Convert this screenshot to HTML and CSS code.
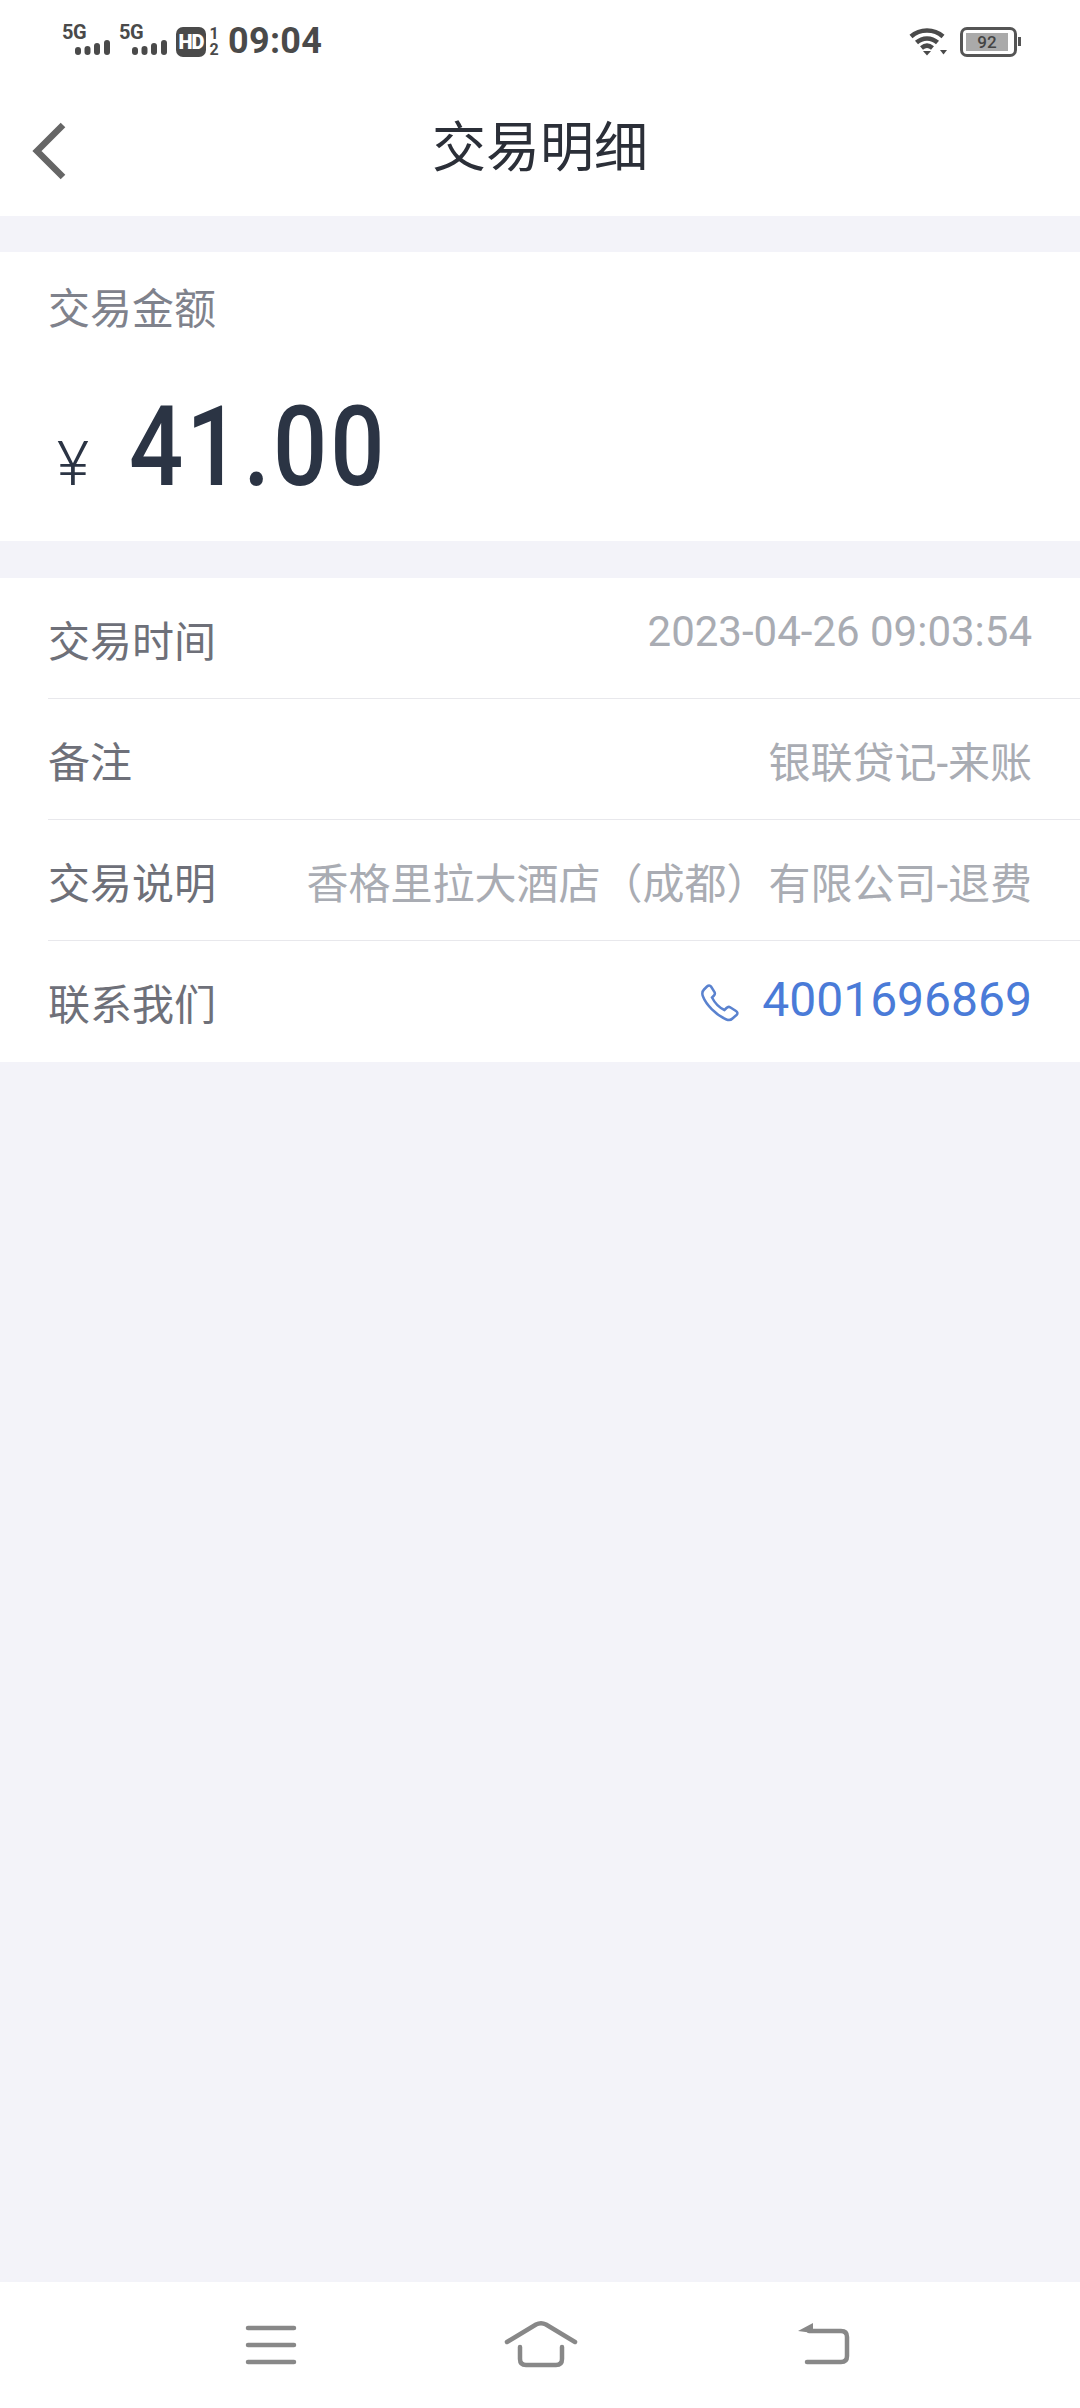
FILE: index.html
```html
<!DOCTYPE html>
<html lang="zh-CN">
<head>
  <meta charset="UTF-8">
  <title>交易明细</title>
  <link rel="stylesheet" href="styles.css">
</head>
<body>
<div id="app">
  <div class="statusbar">
    <div class="status-left">
      <div class="signal">
        <span class="signal-label">5G</span>
        <svg class="signal-bars" width="35" height="15" viewBox="0 0 35 15"><rect x="0" y="7" width="6" height="8" rx="3"/><rect x="9.500" y="6" width="6" height="9" rx="3"/><rect x="19" y="3" width="6" height="12" rx="3"/><rect x="29" y="0" width="6" height="15" rx="3"/></svg>
      </div>
      <div class="signal">
        <span class="signal-label">5G</span>
        <svg class="signal-bars" width="35" height="15" viewBox="0 0 35 15"><rect x="0" y="7" width="6" height="8" rx="3"/><rect x="9.500" y="6" width="6" height="9" rx="3"/><rect x="19" y="3" width="6" height="12" rx="3"/><rect x="29" y="0" width="6" height="15" rx="3"/></svg>
      </div>
      <span class="hd">HD</span>
      <div class="sim"><span>1</span><span>2</span></div>
      <span class="clock">09:04</span>
    </div>
    <div class="status-right">
      <svg class="wifi" width="38" height="28" viewBox="0 0 38 28">
        <path d="M2 8.500C11 0.500 25 0.500 34 8.500" />
        <path d="M7.500 14.500C13.500 9 22.500 9 28.500 14.500" />
        <path d="M12.500 20C16 17 20 17 23.500 20" />
        <polygon class="wifi-solid" points="14,23 22,23 18,27.500"/>
        <polygon class="wifi-solid" points="31,22 38,22 34.500,26.500"/>
      </svg>
      <div class="battery"><span class="battery-level">92</span></div>
    </div>
  </div>

  <div class="titlebar">
    <svg class="back" width="44" height="60" viewBox="0 0 44 60"><path d="M32 3L6 29L32 55"/></svg>
    <h1>交易明细</h1>
  </div>

  <div class="amount-card">
    <div class="amount-label">交易金额</div>
    <div class="amount">
      <span class="currency">¥</span>
      <span class="amount-num">41.00</span>
    </div>
  </div>

  <div class="detail-card">
    <div class="row">
      <span class="row-label">交易时间</span>
      <span class="row-value latin">2023-04-26 09:03:54</span>
    </div>
    <div class="row">
      <span class="row-label">备注</span>
      <span class="row-value">银联贷记-来账</span>
    </div>
    <div class="row">
      <span class="row-label">交易说明</span>
      <span class="row-value">香格里拉大酒店（成都）有限公司-退费</span>
    </div>
    <div class="row">
      <span class="row-label">联系我们</span>
      <span class="contact">
        <svg class="phone" width="38" height="38" viewBox="0 0 38 38"><path d="M3 5.500C1 7.500 1 10 2 12.500C5 20.500 15 31 25.500 35.500C28 36.500 30 36 31.500 34.500L35.500 31C37 29.500 36.500 28 35 27L29.500 23.500C28 22.500 27 22.500 25.500 24L23.500 26C18 23.500 13.500 18.500 11 13.500L13 11.500C14 10.500 14 9 13.500 8L10 2.500C9 1 7.500 1 6 2.500Z"/></svg>
        <span class="contact-num">4001696869</span>
      </span>
    </div>
  </div>

  <div class="spacer"></div>

  <div class="navbar">
    <svg width="80" height="64" viewBox="0 0 80 64"><path d="M17 8H63M17 25H63M17 42H63"/></svg>
    <svg width="80" height="64" viewBox="0 0 80 64"><path d="M6 22L35 4.500Q40 2 45 4.500L74 22"/><path d="M19 27V39Q19 45 25 45H55Q61 45 61 39V27"/></svg>
    <svg width="80" height="64" viewBox="0 0 80 64"><path d="M36 42H70Q76 42 76 36V17Q76 11 70 11H38"/><polygon class="nav-solid" points="27,11 42,3 42,13"/></svg>
  </div>
</div>
</body>
</html>
```

FILE: styles.css
```css
* {
  box-sizing: border-box;
}
html, body {
  margin: 0;
  padding: 0;
}
body {
  font-family: Roboto, "Noto Sans CJK SC", sans-serif;
  background: #f3f3f9;
}
#app {
  width: 1080px;
  height: 2408px;
  display: flex;
  flex-direction: column;
}

/* status bar */
.statusbar {
  height: 84px;
  padding: 24px 60px 0 62px;
  background: #fff;
  display: flex;
  justify-content: space-between;
  align-items: flex-start;
  color: #4a4a4a;
}
.status-left {
  display: flex;
  align-items: flex-start;
}
.signal {
  width: 48px;
  margin-right: 9px;
  display: flex;
  flex-direction: column;
}
.signal-label {
  font-size: 20px;
  font-weight: 700;
  line-height: 16px;
  letter-spacing: -0.5px;
}
.signal-bars {
  align-self: flex-end;
  fill: #4a4a4a;
}
.hd {
  width: 30px;
  height: 30px;
  margin-top: 3px;
  border-radius: 7px;
  background: #4a4a4a;
  color: #fff;
  font-size: 20px;
  font-weight: 900;
  line-height: 30px;
  text-align: center;
  letter-spacing: -1px;
}
.sim {
  width: 12px;
  margin: 2px 0 0 2px;
  display: flex;
  flex-direction: column;
  align-items: center;
  font-size: 16px;
  font-weight: 700;
  line-height: 16px;
}
.clock {
  margin-left: 8px;
  font-size: 36px;
  font-weight: 700;
  line-height: 34px;
  letter-spacing: 0.3px;
}
.status-right {
  display: flex;
  align-items: flex-start;
}
.wifi {
  margin-top: 4px;
  margin-right: 13px;
  fill: none;
  stroke: #4a4a4a;
  stroke-width: 4.500;
}
.wifi-solid {
  fill: #4a4a4a;
  stroke: none;
}
.battery {
  position: relative;
  width: 57px;
  height: 30px;
  margin-top: 3px;
  margin-right: 3px;
  padding: 3px;
  border: 3px solid #555;
  border-radius: 7px;
}
.battery::after {
  content: "";
  position: absolute;
  right: -7px;
  top: 7px;
  width: 3px;
  height: 9px;
  background: #555;
}
.battery-level {
  display: block;
  width: 42px;
  height: 18px;
  background: #aaa;
  color: #444;
  font-size: 17px;
  font-weight: 500;
  line-height: 18px;
  text-align: center;
}

/* title */
.titlebar {
  position: relative;
  height: 132px;
  background: #fff;
  display: flex;
  align-items: center;
  justify-content: center;
}
.titlebar h1 {
  margin: 0 0 2px;
  color: #2b2f38;
  font-size: 54px;
  font-weight: 400;
  line-height: 76px;
}
.back {
  position: absolute;
  left: 31px;
  top: 38px;
  fill: none;
  stroke: #666;
  stroke-width: 6.500;
}

/* amount */
.amount-card {
  height: 289px;
  margin-top: 36px;
  padding: 29px 48px 0;
  background: #fff;
}
.amount-label {
  color: #7f828c;
  font-size: 42px;
  line-height: 58px;
}
.amount {
  margin-top: 53px;
  display: flex;
  align-items: baseline;
  height: 110px;
}
.currency {
  width: 81px;
  padding-left: 9px;
  color: #2b3444;
  font-size: 62px;
  font-weight: 300;
}
.amount-num {
  color: #2b3444;
  font-size: 111px;
  font-weight: 500;
  line-height: 110px;
  letter-spacing: 3.5px;
  transform: scaleX(0.86);
  transform-origin: left center;
}

/* detail rows */
.detail-card {
  margin-top: 37px;
  padding-left: 48px;
  background: #fff;
}
.row {
  height: 121px;
  padding-right: 48px;
  border-bottom: 1px solid #e8e8ec;
  display: flex;
  align-items: center;
  justify-content: space-between;
}
.row:last-child {
  border-bottom: 0;
}
.row-label {
  color: #6e7079;
  font-size: 42px;
}
.row-value {
  color: #a9acb3;
  font-size: 42px;
}
.latin {
  margin-bottom: 14px;
}
.contact {
  display: flex;
  align-items: center;
  margin-bottom: 4px;
}
.phone {
  margin-right: 23px;
  margin-top: 6px;
  fill: none;
  stroke: #5a82cf;
  stroke-width: 2.500;
}
.contact-num {
  color: #4a7bd8;
  font-size: 48px;
}

.spacer {
  flex: 1;
}

/* bottom nav */
.navbar {
  height: 126px;
  padding: 38px 0 0 231px;
  background: #fff;
  display: flex;
  align-items: flex-start;
  gap: 190px;
}
.navbar svg {
  fill: none;
  stroke: #888;
  stroke-width: 4.500;
  stroke-linecap: round;
}
.nav-solid {
  fill: #888;
  stroke: none;
}
```
